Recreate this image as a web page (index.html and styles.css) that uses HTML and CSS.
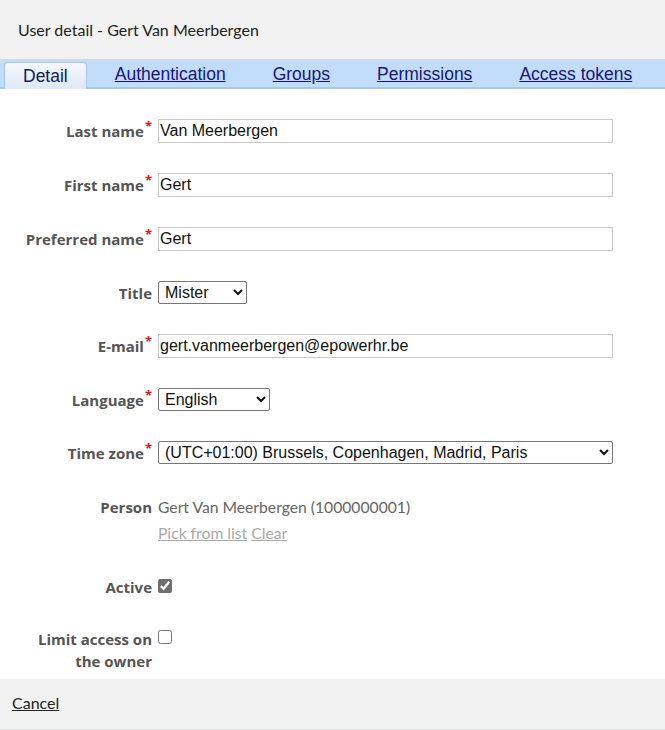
FILE: index.html
```html
<!DOCTYPE html>
<html lang="en">
<head>
<meta charset="utf-8">
<title>User detail - Gert Van Meerbergen</title>
<link rel="stylesheet" href="styles.css">
</head>
<body>
<div class="dialog">
  <header class="dialog-head">
    <h1 class="dialog-title">User detail - Gert Van Meerbergen</h1>
  </header>

  <nav class="tabs">
    <span class="tab tab-active">Detail</span>
    <a class="tab" href="#">Authentication</a>
    <a class="tab" href="#">Groups</a>
    <a class="tab" href="#">Permissions</a>
    <a class="tab" href="#">Access tokens</a>
  </nav>

  <form class="form">
    <label class="lbl" for="last">Last name<span class="req">*</span></label>
    <input class="field" id="last" type="text" value="Van Meerbergen">

    <label class="lbl" for="first">First name<span class="req">*</span></label>
    <input class="field" id="first" type="text" value="Gert">

    <label class="lbl" for="pref">Preferred name<span class="req">*</span></label>
    <input class="field" id="pref" type="text" value="Gert">

    <label class="lbl" for="title">Title</label>
    <div class="cell"><select class="pick pick-title" id="title"><option>Mister</option><option>Miss</option></select></div>

    <label class="lbl" for="mail">E-mail<span class="req">*</span></label>
    <input class="field" id="mail" type="text" value="gert.vanmeerbergen@epowerhr.be">

    <label class="lbl" for="lang">Language<span class="req">*</span></label>
    <div class="cell"><select class="pick pick-lang" id="lang"><option>English</option><option>Nederlands</option></select></div>

    <label class="lbl" for="tz">Time zone<span class="req">*</span></label>
    <div class="cell"><select class="pick pick-tz" id="tz"><option>(UTC+01:00) Brussels, Copenhagen, Madrid, Paris</option></select></div>

    <span class="lbl lbl-person">Person</span>
    <div class="person">
      <div class="person-name">Gert Van Meerbergen (1000000001)</div>
      <div class="person-links"><a href="#">Pick from list</a> <a href="#">Clear</a></div>
    </div>

    <label class="lbl lbl-top" for="active">Active</label>
    <div class="cell cell-top"><input class="check" id="active" type="checkbox" checked></div>

    <label class="lbl lbl-top" for="limit">Limit access on the owner</label>
    <div class="cell cell-top"><input class="check check-off" id="limit" type="checkbox"></div>
  </form>

  <footer class="dialog-foot">
    <a class="cancel" href="#">Cancel</a>
  </footer>
</div>
</body>
</html>
```

FILE: styles.css
```css
* { box-sizing: border-box; }

html, body {
  margin: 0;
  padding: 0;
  background: #ffffff;
}

body {
  font-family: Lato, "Open Sans", sans-serif;
  color: #222;
}

.dialog {
  width: 665px;
  height: 730px;
  display: flex;
  flex-direction: column;
}

/* title strip */
.dialog-head {
  background: #f1f2f1;
  height: 60px;
  display: flex;
  align-items: center;
  padding-left: 18px;
  border-bottom: 1px solid #d6d8da;
}

.dialog-title {
  margin: 0;
  font-size: 16px;
  font-weight: 400;
  color: #222;
}

/* tab strip */
.tabs {
  height: 29px;
  background: #c2dcfb;
  border-bottom: 2px solid #a6c8f0;
  display: flex;
  align-items: flex-end;
  padding-left: 4px;
  font-family: "Liberation Sans", Arial, sans-serif;
  font-size: 17.5px;
}

.tab {
  padding: 0 19px;
  margin-right: 9px;
  height: 26px;
  line-height: 27px;
  color: #16167a;
  text-decoration: underline;
}

.tab-active {
  text-decoration: none;
  color: #0e1a55;
  background: linear-gradient(#f6f9fe, #dce8f9);
  border: 1px solid #a9c6ec;
  border-bottom: none;
  border-radius: 4px 4px 0 0;
  margin-bottom: -2px;
  height: 27px;
  padding: 0 18px;
}

/* form grid */
.form {
  flex: 1;
  display: grid;
  grid-template-columns: 152px 455px;
  column-gap: 6px;
  row-gap: 30px;
  align-items: center;
  align-content: start;
  padding-top: 30px;
}

.lbl {
  padding-left: 14px;
  text-align: right;
  font-family: "Open Sans", Lato, sans-serif;
  font-weight: 700;
  font-size: 15px;
  line-height: 22px;
  color: #555;
}

.lbl-top { align-self: start; }
.lbl-person { align-self: start; line-height: 26px; }

.req {
  color: #e0161b;
  font-size: 13px;
  font-weight: 700;
  vertical-align: top;
  line-height: 12px;
  margin-left: 1px;
}

.field {
  height: 24px;
  width: 455px;
  border: 1px solid #c8c8c8;
  padding: 0 1px;
  margin: 0;
  font-family: "Liberation Sans", Arial, sans-serif;
  font-size: 16px;
  color: #111;
  background: #fff;
  outline: none;
}

.cell { display: flex; }
.cell-top { align-self: start; padding-top: 2px; }

.pick {
  height: 23px;
  margin: 0;
  border: 1px solid #767676;
  border-radius: 2px;
  background: #fff;
  font-family: "Liberation Sans", Arial, sans-serif;
  font-size: 16px;
  color: #111;
  padding: 0 0 0 2px;
}

.pick-title { width: 89px; }
.pick-lang { width: 112px; }
.pick-tz { width: 455px; }

.person {
  align-self: start;
  font-size: 15.7px;
  line-height: 26px;
  color: #666;
}

.person-links a {
  color: #aaa;
  text-decoration: underline;
}

.check {
  width: 14px;
  height: 14px;
  margin: 0;
  accent-color: #6f6f6f;
}

.cell-top .check { margin-top: 1px; }
.cell-top .check-off { margin-top: 0; }

/* bottom bar */
.dialog-foot {
  height: 51px;
  background: #f1f2f1;
  border-bottom: 1px solid #e0e2e2;
  display: flex;
  align-items: center;
  padding-left: 12px;
  padding-bottom: 3px;
}

.cancel {
  font-size: 16px;
  color: #222;
  text-decoration: underline;
}
```
